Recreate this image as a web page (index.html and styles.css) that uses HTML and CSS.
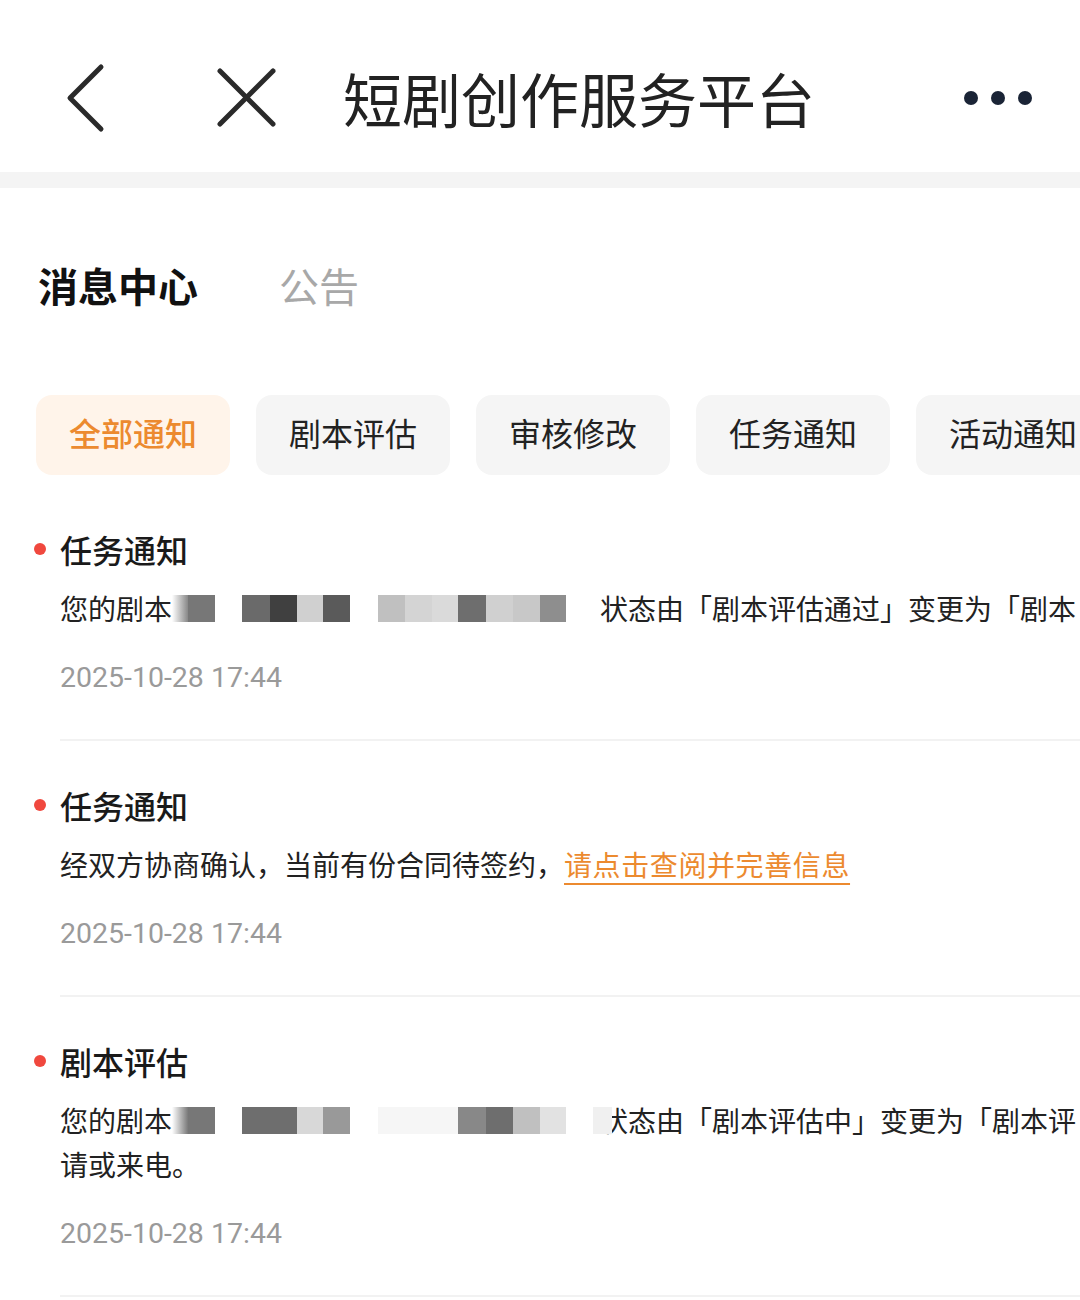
FILE: index.html
```html
<!DOCTYPE html>
<html>
	<head>
		<meta charset="utf-8">
		<title>短剧创作服务平台</title>
		<link rel="stylesheet" href="styles.css">
	</head>
<body>
	<!-- Top bar: back, close, page title, more -->
	<header class="navbar">
		<svg class="nav-back" width="48" height="72" viewBox="0 0 48 72">
			<polyline points="39,5 8,36 39,67" fill="none" stroke="#2a2a2a" stroke-width="5" stroke-linecap="round" stroke-linejoin="round"/>
		</svg>
		<svg class="nav-close" width="72" height="72" viewBox="0 0 72 72">
			<line x1="9" y1="9" x2="62" y2="62" stroke="#2a2a2a" stroke-width="5" stroke-linecap="round"/>
			<line x1="62" y1="9" x2="9" y2="62" stroke="#2a2a2a" stroke-width="5" stroke-linecap="round"/>
		</svg>
		<h1 class="nav-title">短剧创作服务平台</h1>
		<svg class="nav-more" width="80" height="24" viewBox="0 0 80 24">
			<circle cx="13" cy="12" r="7" fill="#1a2436"/>
			<circle cx="40" cy="12" r="7" fill="#1a2436"/>
			<circle cx="67" cy="12" r="7" fill="#1a2436"/>
		</svg>
	</header>
	<div class="band"></div>

	<nav class="tabs">
		<span class="tab tab-on">消息中心</span>
		<span class="tab">公告</span>
	</nav>

	<div class="chips">
		<span class="chip chip-on">全部通知</span>
		<span class="chip">剧本评估</span>
		<span class="chip">审核修改</span>
		<span class="chip">任务通知</span>
		<span class="chip">活动通知</span>
	</div>

	<div class="list">
		<div class="msg">
			<div class="msg-title"><i class="dot"></i>任务通知</div>
			<div class="msg-body">
				<p class="line">您的剧本<span class="mosaic mosaic-1"></span>状态由「剧本评估通过」变更为「剧本</p>
			</div>
			<div class="msg-date">2025-10-28 17:44</div>
		</div>

		<div class="msg">
			<div class="msg-title"><i class="dot"></i>任务通知</div>
			<div class="msg-body">
				<p class="line">经双方协商确认，当前有份合同待签约，<a class="link" href="#">请点击查阅并完善信息</a></p>
			</div>
			<div class="msg-date">2025-10-28 17:44</div>
		</div>

		<div class="msg">
			<div class="msg-title"><i class="dot"></i>剧本评估</div>
			<div class="msg-body">
				<p class="line">您的剧本<span class="mosaic mosaic-3"></span>状态由「剧本评估中」变更为「剧本评</p>
				<p class="line">请或来电。</p>
			</div>
			<div class="msg-date">2025-10-28 17:44</div>
		</div>
	</div>
</body>
</html>
```

FILE: styles.css
```css
body {
	margin: 0;
	padding: 0;
	background: #fff;
	color: #222;
	font-family: "Noto Sans CJK SC", "Noto Sans", sans-serif;
	overflow-x: hidden;
}

/* top bar */
.navbar {
	height: 172px;
	box-sizing: border-box;
	padding: 24px 42px 0 62px;
	display: flex;
	align-items: center;
}
.nav-close {
	margin-left: 101px;
}
.nav-title {
	flex: 1;
	margin: 0 0 0 60px;
	font-size: 59px;
	font-weight: 400;
	line-height: 72px;
	color: #222;
	white-space: nowrap;
}
.band {
	height: 16px;
	background: #f4f4f4;
}

/* 消息中心 / 公告 */
.tabs {
	display: flex;
	gap: 81px;
	padding: 0 38px;
	margin-top: 76px;
	line-height: 42px;
	font-size: 40px;
}
.tab {
	color: #a8a8a8;
}
.tab-on {
	color: #111;
	font-weight: 700;
}

/* filter chips */
.chips {
	display: flex;
	gap: 26px;
	padding-left: 36px;
	margin-top: 89px;
	overflow: hidden;
}
.chip {
	flex-shrink: 0;
	width: 194px;
	height: 80px;
	border-radius: 16px;
	background: #f5f5f5;
	font-size: 32px;
	line-height: 75px;
	text-align: center;
	color: #222;
}
.chip-on {
	background: #fff4ea;
	color: #ec8a2f;
	font-weight: 500;
}

/* message list */
.list {
	padding-top: 10px;
}
.msg {
	margin-left: 60px;
	padding: 42px 0 41px;
	border-bottom: 2px solid #f2f2f2;
}
.msg-title {
	display: flex;
	align-items: center;
	gap: 14px;
	margin-left: -26px;
	font-size: 32px;
	font-weight: 500;
	line-height: 44px;
	color: #1a1a1a;
}
.dot {
	width: 12px;
	height: 12px;
	border-radius: 50%;
	background: #f0483e;
}
.msg-body {
	margin-top: 15px;
	overflow: hidden;
}
.line {
	margin: 0;
	font-size: 28px;
	line-height: 44px;
	white-space: nowrap;
	color: #222;
}
.link {
	color: #ec8a2f;
	letter-spacing: 0.6px;
	text-decoration: underline;
	text-decoration-thickness: 2px;
	text-underline-offset: 7px;
}
.msg-date {
	margin-top: 28px;
	font-family: Roboto, "Liberation Sans", sans-serif;
	font-size: 28.5px;
	line-height: 40px;
	color: #9a9a9a;
}

/* blurred script names */
.mosaic {
	display: inline-block;
	width: 428px;
	height: 27px;
	vertical-align: -2px;
}
.mosaic-1 {
	background: linear-gradient(to right,
		#fff 0, #888 16px,
		#777 16px, #777 43px,
		#fff 43px, #fff 70px,
		#6a6a6a 70px, #6a6a6a 98px,
		#404040 98px, #404040 125px,
		#d0d0d0 125px, #d0d0d0 151px,
		#5a5a5a 151px, #5a5a5a 178px,
		#fff 178px, #fff 206px,
		#c0c0c0 206px, #c0c0c0 233px,
		#d4d4d4 233px, #d4d4d4 260px,
		#dadada 260px, #dadada 286px,
		#6e6e6e 286px, #6e6e6e 314px,
		#d0d0d0 314px, #d0d0d0 341px,
		#c8c8c8 341px, #c8c8c8 368px,
		#8e8e8e 368px, #8e8e8e 394px,
		#fff 394px, #fff 428px);
}
.mosaic-3 {
	position: relative;
	width: 440px;
	margin-right: -12px;
	background: linear-gradient(to right,
		#fff 0, #7a7a7a 16px,
		#777 16px, #777 43px,
		#fff 43px, #fff 70px,
		#6e6e6e 70px, #6e6e6e 125px,
		#d8d8d8 125px, #d8d8d8 151px,
		#999 151px, #999 178px,
		#fff 178px, #fff 206px,
		#f6f6f6 206px, #f6f6f6 286px,
		#888 286px, #888 314px,
		#6e6e6e 314px, #6e6e6e 341px,
		#c0c0c0 341px, #c0c0c0 368px,
		#e2e2e2 368px, #e2e2e2 394px,
		#fff 394px, #fff 421px,
		#f0f0f0 421px, #f0f0f0 440px);
}
```
